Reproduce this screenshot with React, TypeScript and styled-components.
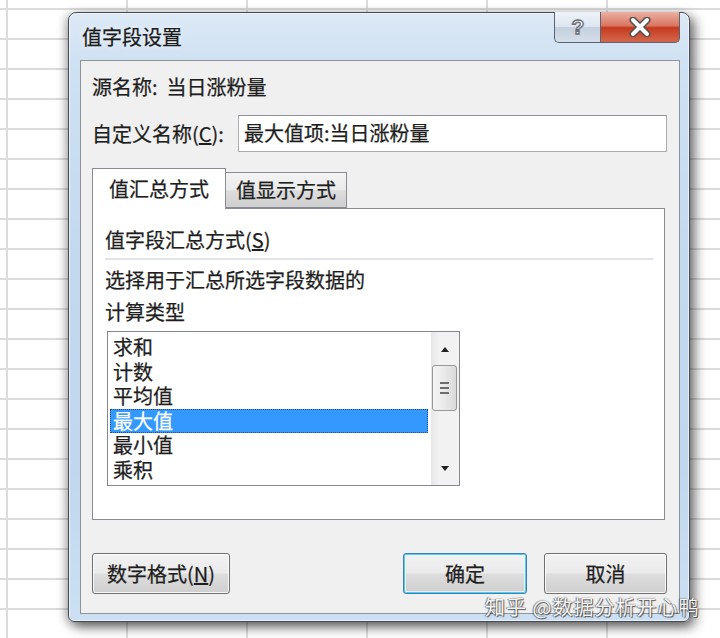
import styled, { createGlobalStyle } from 'styled-components'

const GlobalStyle = createGlobalStyle`
  html, body {
    margin: 0;
    padding: 0;
  }
  body {
    font-family: 'Noto Sans CJK SC', 'Noto Sans', sans-serif;
    color: #1e1e1e;
  }
`

const summaryTypes = ['求和', '计数', '平均值', '最大值', '最小值', '乘积']

export default function App() {
  return (
    <>
      <GlobalStyle />
      <Sheet>
        <Window>
          <TitleBar>
            <Title>值字段设置</Title>
            <Controls>
              <HelpButton>
                <svg width="20" height="22" viewBox="0 0 20 22">
                  <text
                    x="10"
                    y="18"
                    textAnchor="middle"
                    fontSize="21"
                    fontWeight="700"
                    fontFamily="'Liberation Sans', sans-serif"
                    fill="#ffffff"
                    stroke="#6b7078"
                    strokeWidth="1.4"
                  >
                    ?
                  </text>
                </svg>
              </HelpButton>
              <CloseButton>
                <svg width="26" height="20" viewBox="0 0 26 20">
                  <path d="M6 3 L20 17 M20 3 L6 17" stroke="#4e4e4e" strokeWidth="7" strokeLinecap="round" />
                  <path d="M6 3 L20 17 M20 3 L6 17" stroke="#ffffff" strokeWidth="4" strokeLinecap="round" />
                </svg>
              </CloseButton>
            </Controls>
          </TitleBar>
          <Client>
            <SourceRow>源名称:&nbsp; 当日涨粉量</SourceRow>
            <NameRow>
              <NameLabel>
                自定义名称(<u>C</u>):
              </NameLabel>
              <NameInput>最大值项:当日涨粉量</NameInput>
            </NameRow>
            <TabStrip>
              <Tab $active $width={134}>值汇总方式</Tab>
              <Tab $width={122}>值显示方式</Tab>
            </TabStrip>
            <TabPanel>
              <GroupTitle>
                值字段汇总方式(<u>S</u>)
              </GroupTitle>
              <Separator />
              <Hint>
                选择用于汇总所选字段数据的
                <br />
                计算类型
              </Hint>
              <ListBox>
                <Items>
                  {summaryTypes.map((t) => (
                    <Item key={t} $selected={t === '最大值'}>
                      {t}
                    </Item>
                  ))}
                </Items>
                <ScrollBar>
                  <ArrowButton>
                    <svg width="10" height="6" viewBox="0 0 10 6">
                      <path d="M1 6 L5 1 L9 6 Z" fill="#222" />
                    </svg>
                  </ArrowButton>
                  <Thumb>
                    <Grip />
                    <Grip />
                    <Grip />
                  </Thumb>
                  <Track />
                  <ArrowButton>
                    <svg width="10" height="6" viewBox="0 0 10 6">
                      <path d="M1 0 L9 0 L5 5 Z" fill="#222" />
                    </svg>
                  </ArrowButton>
                </ScrollBar>
              </ListBox>
            </TabPanel>
            <ButtonRow>
              <PushButton $width={138}>
                数字格式(<u>N</u>)
              </PushButton>
              <Spacer />
              <PushButton $width={124} $default>
                确定
              </PushButton>
              <PushButton $width={123}>取消</PushButton>
            </ButtonRow>
          </Client>
        </Window>
        <Watermark>知乎 @数据分析开心鸭</Watermark>
      </Sheet>
    </>
  )
}

const Sheet = styled.div`
  position: relative;
  width: 720px;
  height: 638px;
  overflow: hidden;
  box-sizing: border-box;
  padding: 12px 0 0 68px;
  background-color: #ffffff;
  background-image: linear-gradient(to right, #dcdcdc 2px, transparent 2px),
    linear-gradient(to bottom, #dcdcdc 2px, transparent 2px);
  background-size: 120px 100%, 100% 30px;
  background-position: 6px 0, 0 8px;
`

const Window = styled.div`
  width: 622px;
  height: 610px;
  box-sizing: border-box;
  display: flex;
  flex-direction: column;
  border: 1px solid #464b53;
  border-radius: 8px 8px 6px 6px;
  background: linear-gradient(180deg, #dde9f6 0%, #cfe1f3 8%, #c3d9f0 40%, #c0d7ef 75%, #cde0f3 100%);
  box-shadow: inset 0 0 0 1px rgba(255, 255, 255, 0.6), 5px 5px 12px rgba(0, 0, 0, 0.55),
    -3px 2px 10px rgba(0, 0, 0, 0.25);
`

const TitleBar = styled.div`
  height: 47px;
  flex-shrink: 0;
  display: flex;
  justify-content: space-between;
  align-items: flex-start;
  padding: 0 9px 0 13px;
`

const Title = styled.div`
  font-size: 20px;
  line-height: 26px;
  margin-top: 11px;
  color: #1b1b1b;
  -webkit-text-stroke: 0.25px #1b1b1b;
  text-shadow: 0 0 6px rgba(255, 255, 255, 0.9);
`

const Controls = styled.div`
  display: flex;
  margin-top: -1px;
`

const CaptionButton = styled.div`
  height: 31px;
  box-sizing: border-box;
  display: flex;
  align-items: center;
  justify-content: center;
  border: 1px solid #5b6472;
  border-top: none;
`

const HelpButton = styled(CaptionButton)`
  width: 46px;
  border-right: none;
  border-radius: 0 0 0 5px;
  background: linear-gradient(180deg, #eef3f9 0%, #dde6f0 48%, #c3cfdc 52%, #d4dfea 100%);
`

const CloseButton = styled(CaptionButton)`
  width: 80px;
  border-radius: 0 0 5px 0;
  background: linear-gradient(180deg, #eab0a3 0%, #d9745f 46%, #c53b20 52%, #d5674c 100%);
`

const Client = styled.div`
  flex: 1;
  display: flex;
  flex-direction: column;
  margin: 0 9px 7px 11px;
  padding: 13px 12px 0 11px;
  border: 1px solid #8d949c;
  background: #f0f0f0;
  font-size: 20px;
  -webkit-text-stroke: 0.25px currentColor;
`

const SourceRow = styled.div`
  line-height: 26px;
  height: 26px;
`

const NameRow = styled.div`
  display: flex;
  align-items: center;
  margin-top: 15px;
  height: 37px;
`

const NameLabel = styled.div`
  width: 146px;
  line-height: 26px;
`

const NameInput = styled.div`
  flex: 1;
  height: 37px;
  box-sizing: border-box;
  border: 1px solid #abadb3;
  border-top-color: #8e9197;
  background: #ffffff;
  padding: 0 5px;
  line-height: 33px;
`

const TabStrip = styled.div`
  display: flex;
  align-items: flex-end;
  margin-top: 16px;
  height: 40px;
  position: relative;
  z-index: 1;
`

const Tab = styled.div<{ $active?: boolean; $width: number }>`
  width: ${(p) => p.$width}px;
  box-sizing: border-box;
  height: ${(p) => (p.$active ? 41 : 36)}px;
  margin-bottom: ${(p) => (p.$active ? -1 : 0)}px;
  margin-left: ${(p) => (p.$active ? 0 : -1)}px;
  border: 1px solid #898c95;
  border-bottom: ${(p) => (p.$active ? 'none' : '1px solid #898c95')};
  background: ${(p) => (p.$active ? '#ffffff' : 'linear-gradient(180deg, #f3f3f3 0%, #ebebeb 50%, #dddddd 52%, #cfcfcf 100%)')};
  padding-top: ${(p) => (p.$active ? 5 : 2)}px;
  text-align: center;
  line-height: 30px;
`

const TabPanel = styled.div`
  height: 312px;
  box-sizing: border-box;
  margin-right: 2px;
  border: 1px solid #898c95;
  background: #ffffff;
  padding: 18px 11px 0 12px;
  display: flex;
  flex-direction: column;
`

const GroupTitle = styled.div`
  line-height: 26px;
`

const Separator = styled.div`
  height: 2px;
  background: #dfe4ea;
  margin-top: 5px;
`

const Hint = styled.div`
  margin-top: 4px;
  line-height: 32px;
`

const ListBox = styled.div`
  width: 353px;
  height: 155px;
  box-sizing: border-box;
  margin: 3px 0 0 2px;
  border: 1px solid #828790;
  display: flex;
`

const Items = styled.div`
  flex: 1;
  padding: 3px 3px 0 2px;
`

const Item = styled.div<{ $selected?: boolean }>`
  height: 24.5px;
  line-height: 24.5px;
  padding-left: 3px;
  box-sizing: border-box;
  color: ${(p) => (p.$selected ? '#ffffff' : '#1e1e1e')};
  background: ${(p) => (p.$selected ? '#3399ff' : 'transparent')};
  outline: ${(p) => (p.$selected ? '1px dotted #2a4f7a' : 'none')};
  outline-offset: -1px;
`

const ScrollBar = styled.div`
  width: 28px;
  display: flex;
  flex-direction: column;
  background: linear-gradient(90deg, #e6e6e6 0%, #f2f2f2 30%, #f2f2f2 100%);
`

const ArrowButton = styled.div`
  height: 33px;
  display: flex;
  align-items: center;
  justify-content: center;
`

const Thumb = styled.div`
  height: 46px;
  margin: 0 2px 0 1px;
  box-sizing: border-box;
  border: 1px solid #979797;
  border-radius: 3px;
  background: linear-gradient(90deg, #f4f4f4 0%, #e9e9e9 50%, #d9d9d9 100%);
  display: flex;
  flex-direction: column;
  align-items: center;
  justify-content: center;
  gap: 3px;
`

const Grip = styled.div`
  width: 9px;
  height: 2px;
  background: #6e6e6e;
`

const Track = styled.div`
  flex: 1;
`

const ButtonRow = styled.div`
  display: flex;
  gap: 17px;
  margin-top: 33px;
`

const Spacer = styled.div`
  flex: 1;
`

const PushButton = styled.div<{ $width: number; $default?: boolean }>`
  width: ${(p) => p.$width}px;
  height: 41px;
  box-sizing: border-box;
  border: 1px solid ${(p) => (p.$default ? '#3c7fb1' : '#707070')};
  border-radius: 3px;
  background: linear-gradient(180deg, #f2f2f2 0%, #ebebeb 48%, #dddddd 52%, #cfcfcf 100%);
  box-shadow: ${(p) =>
    p.$default ? 'inset 0 0 0 1px #48d0f6, inset 0 0 0 2px rgba(255,255,255,0.6)' : 'inset 0 0 0 1px rgba(255,255,255,0.8)'};
  display: flex;
  align-items: center;
  justify-content: center;
  line-height: 26px;
`

const Watermark = styled.div`
  position: absolute;
  left: 485px;
  top: 593px;
  font-size: 20px;
  line-height: 28px;
  letter-spacing: 1px;
  color: rgba(255, 255, 255, 0.95);
  text-shadow: 0 0 1px #555, 1px 1px 1px rgba(0, 0, 0, 0.6), -1px 0 1px rgba(0, 0, 0, 0.4);
  white-space: nowrap;
`
